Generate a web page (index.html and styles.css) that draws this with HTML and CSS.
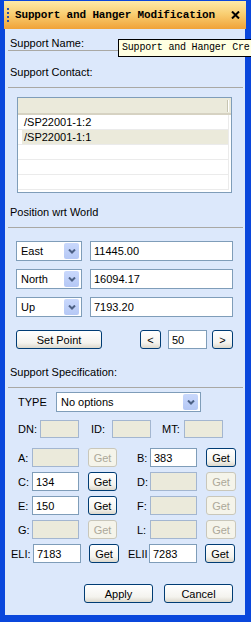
FILE: index.html
```html
<!DOCTYPE html>
<html lang="en">
<head>
    <meta charset="UTF-8">
    <title>Support and Hanger Modification</title>
    <link rel="stylesheet" href="styles.css">
</head>
<body>
    <div class="window">
        <div class="titlebar">
            <span class="grip"></span>
            <span class="title">Support and Hanger Modification</span>
            <svg class="close" width="9" height="8" viewBox="0 0 9 8">
                <path d="M1 0.5 L8 7.5 M8 0.5 L1 7.5" stroke="#000" stroke-width="2" fill="none"/>
            </svg>
        </div>

        <div class="pane">
            <div class="label name">Support Name:</div>
            <div class="sep"></div>

            <div class="label gap15">Support Contact:</div>
            <div class="sep"></div>

            <div class="list">
                <div class="list-head"><span class="head-div"></span></div>
                <div class="list-row">/SP22001-1:2</div>
                <div class="list-row sel">/SP22001-1:1</div>
                <div class="list-row"></div>
                <div class="list-row"></div>
                <div class="list-row"></div>
            </div>

            <div class="label gap13">Position wrt World</div>
            <div class="sep"></div>

            <!-- coordinate rows -->
            <div class="pos-row first">
                <div class="combo"><span>East</span><span class="drop"><svg width="8" height="5" viewBox="0 0 8 5"><path d="M1 0.5 L4 3.5 L7 0.5" stroke="#4d6185" stroke-width="2" fill="none"/></svg></span></div>
                <div class="field pos-val">11445.00</div>
            </div>
            <div class="pos-row">
                <div class="combo"><span>North</span><span class="drop"><svg width="8" height="5" viewBox="0 0 8 5"><path d="M1 0.5 L4 3.5 L7 0.5" stroke="#4d6185" stroke-width="2" fill="none"/></svg></span></div>
                <div class="field pos-val">16094.17</div>
            </div>
            <div class="pos-row">
                <div class="combo"><span>Up</span><span class="drop"><svg width="8" height="5" viewBox="0 0 8 5"><path d="M1 0.5 L4 3.5 L7 0.5" stroke="#4d6185" stroke-width="2" fill="none"/></svg></span></div>
                <div class="field pos-val">7193.20</div>
            </div>

            <div class="point-row">
                <button class="btn set-point">Set Point</button>
                <button class="btn step prev">&lt;</button>
                <div class="field step-val">50</div>
                <button class="btn step next">&gt;</button>
            </div>

            <div class="label gap17">Support Specification:</div>
            <div class="sep"></div>

            <div class="type-row">
                <span class="type-lbl">TYPE</span>
                <div class="combo type-combo"><span>No options</span><span class="drop"><svg width="8" height="5" viewBox="0 0 8 5"><path d="M1 0.5 L4 3.5 L7 0.5" stroke="#4d6185" stroke-width="2" fill="none"/></svg></span></div>
            </div>

            <div class="dn-row">
                <span class="lbl-dn">DN:</span><div class="field off small"></div>
                <span class="lbl-id">ID:</span><div class="field off small"></div>
                <span class="lbl-mt">MT:</span><div class="field off small"></div>
            </div>

            <div class="dim-row first">
                <span class="lbl-l">A:</span><div class="field off dim"></div><button class="btn get" disabled>Get</button>
                <span class="lbl-r">B:</span><div class="field dim">383</div><button class="btn get wide">Get</button>
            </div>
            <div class="dim-row">
                <span class="lbl-l">C:</span><div class="field dim">134</div><button class="btn get">Get</button>
                <span class="lbl-r">D:</span><div class="field off dim"></div><button class="btn get wide" disabled>Get</button>
            </div>
            <div class="dim-row">
                <span class="lbl-l">E:</span><div class="field dim">150</div><button class="btn get">Get</button>
                <span class="lbl-r">F:</span><div class="field off dim"></div><button class="btn get wide" disabled>Get</button>
            </div>
            <div class="dim-row">
                <span class="lbl-l">G:</span><div class="field off dim"></div><button class="btn get" disabled>Get</button>
                <span class="lbl-r">L:</span><div class="field off dim"></div><button class="btn get wide" disabled>Get</button>
            </div>
            <div class="dim-row el-row">
                <span class="lbl-el">ELI:</span><div class="field el">7183</div><button class="btn get el-get">Get</button>
                <span class="lbl-el2">ELII</span><div class="field el">7283</div><button class="btn get el-get">Get</button>
            </div>

            <div class="actions">
                <button class="btn action">Apply</button>
                <button class="btn action">Cancel</button>
            </div>
        </div>
    </div>

    <div class="tooltip">Support and Hanger Cre</div>
</body>
</html>
```

FILE: styles.css
```css
body {
    margin: 0;
    overflow: hidden;
    font-family: "Liberation Sans", Arial, sans-serif;
    font-size: 11px;
    color: #000;
}

.window {
    position: relative;
    width: 251px;
    height: 622px;
    box-sizing: border-box;
    border-style: solid;
    border-color: #0a47dc;
    border-width: 1px 5px 6px 4px;
    background-color: #dce8fb;
    box-shadow: inset 0 0 0 1px #0a47dc;
}

/* title bar of the docking pane */
.titlebar {
    display: flex;
    align-items: center;
    height: 28px;
    background: linear-gradient(#fdeaa9, #f9cf73 45%, #f0a238);
}

.grip {
    width: 2px;
    height: 15px;
    margin-left: 3px;
    background: repeating-linear-gradient(#2a4fa8 0 2px, transparent 2px 4px);
}

.title {
    margin-left: 6px;
    font-family: "Liberation Mono", monospace;
    font-weight: bold;
    font-size: 11px;
    letter-spacing: -0.15px;
}

.close {
    margin-left: auto;
    margin-right: 6px;
}

.tooltip {
    position: absolute;
    left: 118px;
    top: 39px;
    right: 0;
    height: 16px;
    line-height: 16px;
    padding-left: 3px;
    border: 1px solid #000;
    border-right: none;
    background-color: #ffffe1;
    font-family: "Liberation Mono", monospace;
    font-size: 10px;
    letter-spacing: -0.2px;
    white-space: nowrap;
}

/* section titles */
.label {
    height: 13px;
    line-height: 13px;
    padding-left: 6px;
}

.name { margin-top: 8px; }
.gap13 { margin-top: 13px; }
.gap15 { margin-top: 15px; }
.gap17 { margin-top: 17px; }

.sep {
    margin: 8px 3px 0 4px;
    border-top: 1px solid #a9a8a4;
}

.name + .sep { margin-top: 0; }

/* list of contacts */
.list {
    margin: 9px 0 0 13px;
    width: 215px;
    height: 96px;
    box-sizing: border-box;
    border: 1px solid #7f9db9;
    background-color: #fff;
    overflow: hidden;
}

.list-head {
    position: relative;
    height: 15px;
    background-color: #ebeadb;
    border-bottom: 2px solid #d6d2c2;
}

.head-div {
    position: absolute;
    left: 209px;
    top: 2px;
    width: 1px;
    height: 12px;
    background-color: #c7c5b2;
    border-right: 1px solid #fff;
}

.list-row {
    height: 14px;
    line-height: 14px;
    margin-right: 2px;
    padding-left: 6px;
    border-bottom: 1px solid #ebebeb;
    border-right: 1px solid #ebebeb;
}

.list-row.sel {
    background: linear-gradient(to right, #fff 4px, #ebeadb 4px);
}

/* generic fields */
.field {
    box-sizing: border-box;
    border: 1px solid #7f9db9;
    background-color: #fff;
    padding-left: 3px;
    display: flex;
    align-items: center;
}

.field.off {
    background-color: #ebeadb;
    border-color: #a3b6d0;
}

.combo {
    display: flex;
    align-items: center;
    box-sizing: border-box;
    width: 66px;
    height: 20px;
    padding-left: 4px;
    border: 1px solid #7f9db9;
    background-color: #fff;
}

.drop {
    display: flex;
    align-items: center;
    justify-content: center;
    margin-left: auto;
    margin-right: 2px;
    width: 15px;
    height: 16px;
    border-radius: 2px;
    background: linear-gradient(#c9d8fc, #b5c8f5);
}

.pos-row {
    display: flex;
    padding-left: 12px;
    margin-top: 8px;
}

.pos-row.first { margin-top: 13px; }

.pos-val {
    width: 143px;
    height: 20px;
    margin-left: 8px;
}

/* xp style buttons */
.btn {
    box-sizing: border-box;
    height: 19px;
    padding: 0;
    border: 1px solid #003c74;
    border-radius: 3px;
    background: linear-gradient(#ffffff, #f4f3ee 70%, #dcd8cc);
    font-family: "Liberation Sans", Arial, sans-serif;
    font-size: 11px;
    color: #000;
}

.btn:disabled {
    border-color: #c9c7ba;
    background: #f5f4ea;
    color: #aca899;
}

.point-row {
    display: flex;
    align-items: center;
    padding-left: 12px;
    margin-top: 13px;
    height: 19px;
}

.set-point { width: 86px; }

.step { width: 21px; }
.prev { margin-left: 38px; }
.next { margin-left: 5px; }

.step-val {
    width: 39px;
    height: 19px;
    margin-left: 7px;
}

.type-row {
    display: flex;
    align-items: center;
    padding-left: 14px;
    margin-top: 4px;
}

.type-lbl { width: 38px; }

.type-combo { width: 145px; }

.dn-row {
    display: flex;
    align-items: center;
    padding-left: 14px;
    margin-top: 8px;
}

.small {
    width: 39px;
    height: 18px;
}

.lbl-dn { width: 22px; }
.lbl-id { width: 21px; margin-left: 12px; }
.lbl-mt { width: 22px; margin-left: 11px; }

.dim-row {
    display: flex;
    align-items: center;
    padding-left: 14px;
    margin-top: 5px;
    height: 19px;
}

.dim-row.first { margin-top: 10px; }

.lbl-l { width: 14px; }
.lbl-r { width: 13px; margin-left: 20px; }

.dim {
    width: 47px;
    height: 19px;
}

.get {
    width: 29px;
    margin-left: 9px;
}

.get.wide { width: 30px; }

.el-row { padding-left: 7px; }

.lbl-el { width: 22px; }
.lbl-el2 { width: 21px; margin-left: 9px; }

.el {
    width: 48px;
    height: 19px;
}

.el-get {
    width: 30px;
    margin-left: 8px;
}

.actions {
    display: flex;
    justify-content: flex-end;
    gap: 11px;
    padding-right: 13px;
    margin-top: 21px;
}

.action { width: 69px; }
```
